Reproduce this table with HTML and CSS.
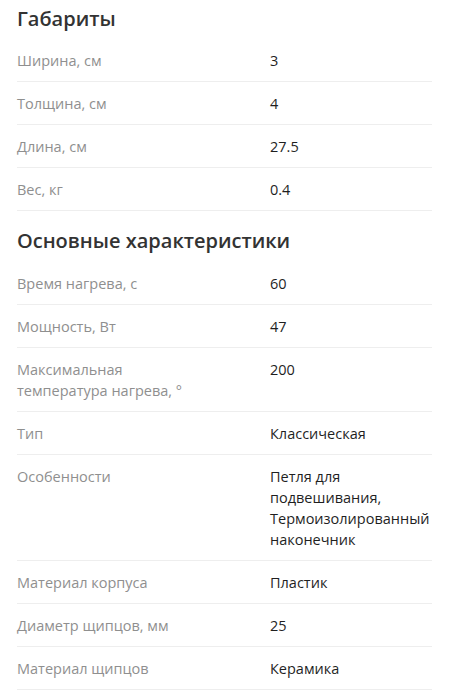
FILE: index.html
```html
<!DOCTYPE html>
<html lang="ru">
<head>
    <meta charset="UTF-8">
    <meta name="viewport" content="width=device-width, initial-scale=1.0">
    <title>Характеристики</title>
    <link rel="stylesheet" href="styles.css">
</head>
<body>
    <div class="specs">
        <h2 class="specs-title">Габариты</h2>
        <div class="spec-row"><div class="spec-name">Ширина, см</div><div class="spec-value">3</div></div>
        <div class="spec-row"><div class="spec-name">Толщина, см</div><div class="spec-value">4</div></div>
        <div class="spec-row"><div class="spec-name">Длина, см</div><div class="spec-value">27.5</div></div>
        <div class="spec-row"><div class="spec-name">Вес, кг</div><div class="spec-value">0.4</div></div>

        <h2 class="specs-title">Основные характеристики</h2>
        <div class="spec-row"><div class="spec-name">Время нагрева, с</div><div class="spec-value">60</div></div>
        <div class="spec-row"><div class="spec-name">Мощность, Вт</div><div class="spec-value">47</div></div>
        <div class="spec-row"><div class="spec-name">Максимальная температура нагрева, °</div><div class="spec-value">200</div></div>
        <div class="spec-row"><div class="spec-name">Тип</div><div class="spec-value">Классическая</div></div>
        <div class="spec-row"><div class="spec-name">Особенности</div><div class="spec-value">Петля для подвешивания, Термоизолированный наконечник</div></div>
        <div class="spec-row"><div class="spec-name">Материал корпуса</div><div class="spec-value">Пластик</div></div>
        <div class="spec-row"><div class="spec-name">Диаметр щипцов, мм</div><div class="spec-value">25</div></div>
        <div class="spec-row"><div class="spec-name">Материал щипцов</div><div class="spec-value">Керамика</div></div>
    </div>
</body>
</html>
```

FILE: styles.css
```css
body {
    margin: 0;
    background: #fff;
    font-family: "Open Sans", Arial, sans-serif;
}
.specs {
    padding: 5px 18px 0 17px;
}
.specs-title {
    font-size: 20px;
    line-height: 28px;
    font-weight: 600;
    color: #333;
    margin: 0 0 6px;
}
.spec-row + .specs-title {
    margin-top: 16px;
    margin-bottom: 7px;
}
.spec-row {
    display: grid;
    grid-template-columns: 253px 1fr;
    padding: 11px 0 10px;
    border-bottom: 1px solid #eeeeee;
    font-size: 14.5px;
    line-height: 21px;
}
.spec-name {
    color: #8f8f8f;
    padding-right: 60px;
}
.spec-value {
    color: #1f1f1f;
}
```
